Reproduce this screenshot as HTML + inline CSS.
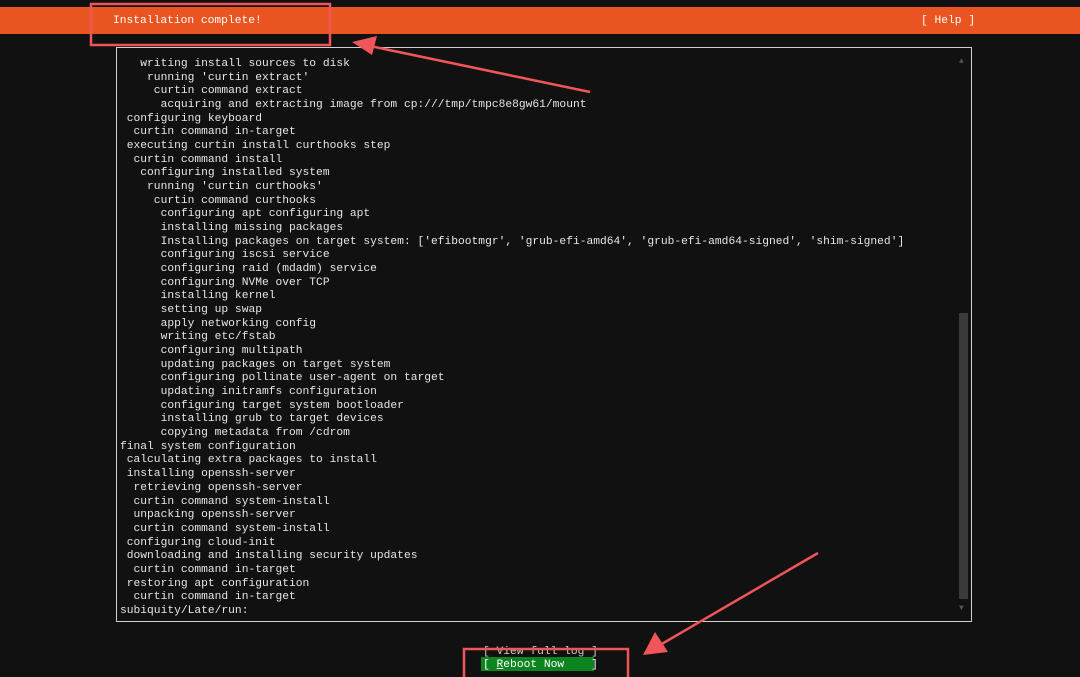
<!DOCTYPE html>
<html><head><style>
body{margin:0;width:1080px;height:677px;background:#111;overflow:hidden;position:relative;font-family:"Liberation Mono",monospace;font-size:11.27px;color:#e6e6e6}
.bar{position:absolute;left:0;top:7px;width:1080px;height:27px;background:#e95420}
.t{position:absolute;white-space:pre;line-height:13.675px}
.box{position:absolute;left:116px;top:47px;width:854px;height:573px;border:1px solid #cfcfcf}
</style></head><body>
<div class="bar"></div>
<div class="t" style="left:113px;top:15px;color:#fff">Installation complete!</div>
<div class="t" style="left:921px;top:15px;color:#fff">[ Help ]</div>
<div class="box"></div>
<div style="position:absolute;left:959px;top:313px;width:9px;height:286px;background:#3a3a3a"></div>
<div class="t" style="left:959px;top:55px;color:#555;font-size:8px">▲</div>
<div class="t" style="left:959px;top:602px;color:#555;font-size:8px">▼</div>
<div class="t" style="left:120px;top:58px">   writing install sources to disk
    running 'curtin extract'
     curtin command extract
      acquiring and extracting image from cp:///tmp/tmpc8e8gw61/mount
 configuring keyboard
  curtin command in-target
 executing curtin install curthooks step
  curtin command install
   configuring installed system
    running 'curtin curthooks'
     curtin command curthooks
      configuring apt configuring apt
      installing missing packages
      Installing packages on target system: ['efibootmgr', 'grub-efi-amd64', 'grub-efi-amd64-signed', 'shim-signed']
      configuring iscsi service
      configuring raid (mdadm) service
      configuring NVMe over TCP
      installing kernel
      setting up swap
      apply networking config
      writing etc/fstab
      configuring multipath
      updating packages on target system
      configuring pollinate user-agent on target
      updating initramfs configuration
      configuring target system bootloader
      installing grub to target devices
      copying metadata from /cdrom
final system configuration
 calculating extra packages to install
 installing openssh-server
  retrieving openssh-server
  curtin command system-install
  unpacking openssh-server
  curtin command system-install
 configuring cloud-init
 downloading and installing security updates
  curtin command in-target
 restoring apt configuration
  curtin command in-target
subiquity/Late/run:</div>
<div class="t" style="left:483px;top:646px;color:#ccc">[ View full log ]</div>
<div style="position:absolute;left:481px;top:657px;width:113px;height:14px;background:#0e8420"></div>
<div class="t" style="left:483px;top:659px;color:#fff">[ <u>R</u>eboot Now    ]</div>
<svg width="1080" height="677" style="position:absolute;left:0;top:0">
<g stroke="#f0555a" fill="none" stroke-width="2.5">
<rect x="91" y="4" width="239" height="41"/>
<rect x="464" y="649" width="164" height="30"/>
<line x1="590" y1="92" x2="370" y2="46"/>
<line x1="818" y1="553" x2="660" y2="645"/>
</g>
<g fill="#f0555a">
<polygon points="352,42 377,36 372,55"/>
<polygon points="643,655 655,632 668,652"/>
</g>
</svg>
</body></html>
